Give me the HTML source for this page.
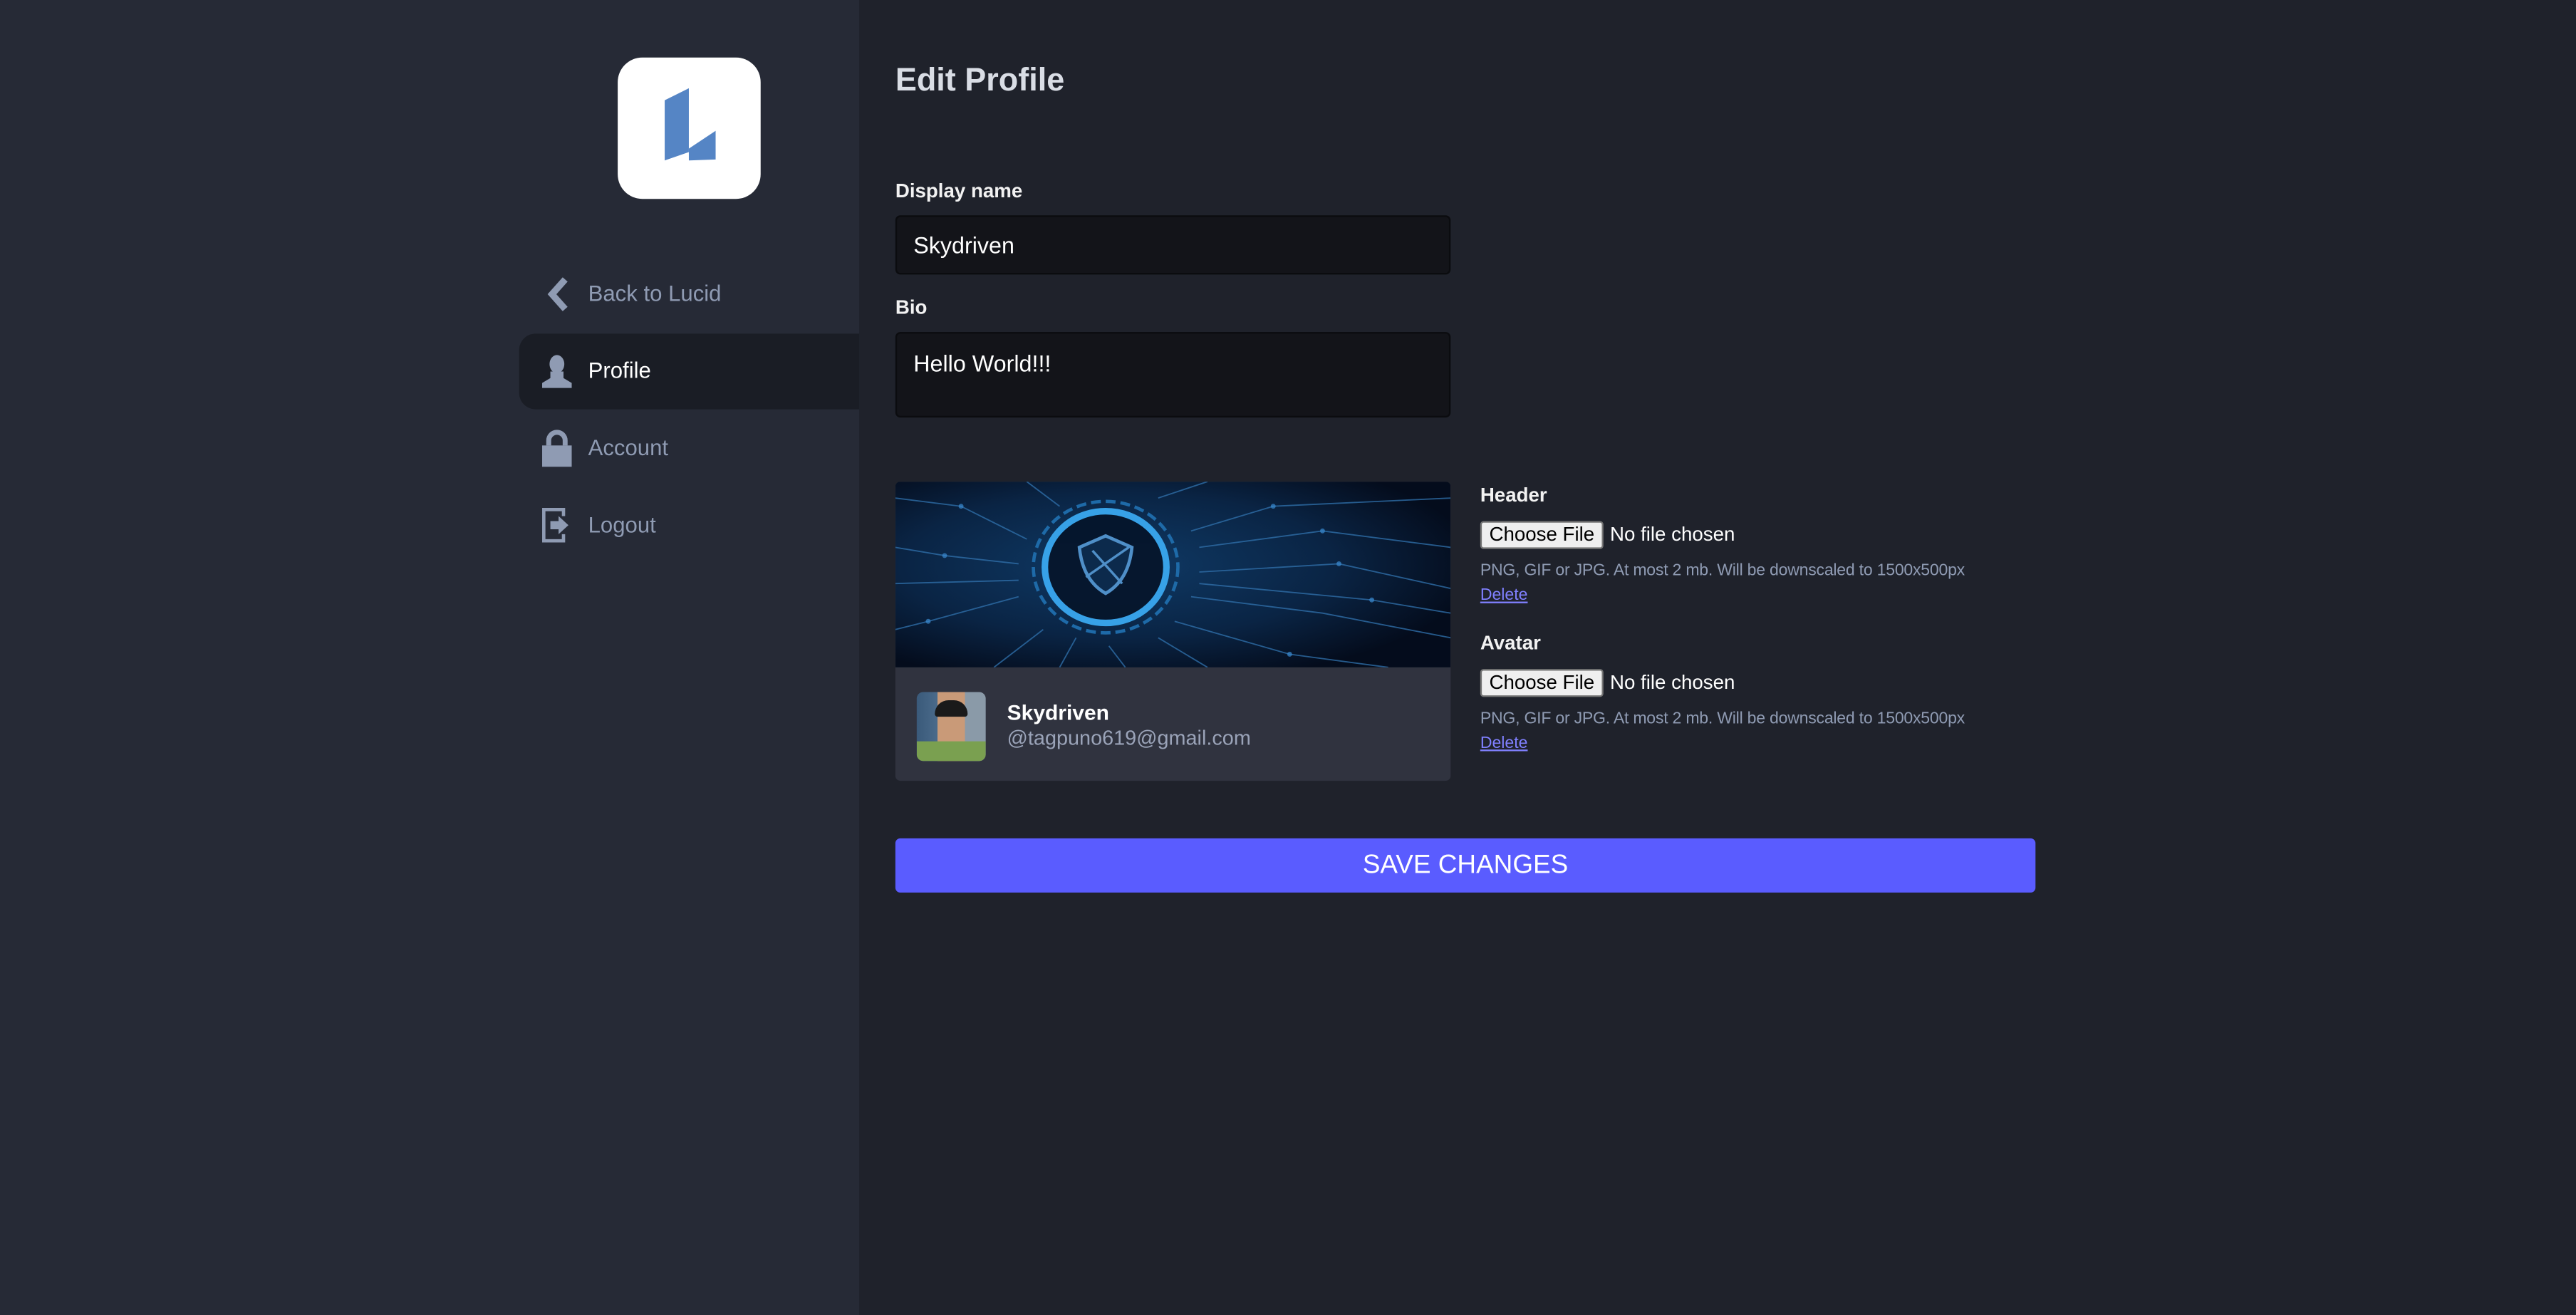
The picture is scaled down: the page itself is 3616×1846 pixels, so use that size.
<!DOCTYPE html>
<html><head><meta charset="utf-8"><style>
html,body{margin:0;padding:0;width:3616px;height:1846px;overflow:hidden;background:#1f222b;font-family:"Liberation Sans",sans-serif}
#w{position:absolute;left:0;top:0;width:1568px;height:800px;transform:scale(2.30612,2.3075);transform-origin:0 0;background:#1f222b}
.a{position:absolute}
.side{left:0;top:0;width:523px;height:800px;background:#262a36}
.logo{left:376px;top:35px;width:87px;height:86px;background:#fff;border-radius:15px}
.nav{left:358px;font-size:13.5px;color:#8f9bb3}
.act{left:316px;top:203px;width:207px;height:46px;background:#1a1d25;border-radius:10px 0 0 10px}
.lbl{font-size:12px;font-weight:bold;color:#f2f2f2}
.inp{left:545px;width:338px;background:#131419;border:1px solid #0b0c0f;border-radius:3px;color:#fff;font-size:14px;box-sizing:border-box;padding-left:10px}
.btn{left:901px;width:75px;height:17px;background:#efefef;border:1px solid #767676;border-radius:2px;font-size:12px;color:#000;text-align:center;line-height:15px;box-sizing:border-box}
.nf{left:980px;font-size:12px;color:#fff}
.hint{left:901px;font-size:10px;color:#8f9bb3;letter-spacing:-0.1px}
.del{left:901px;font-size:10px;color:#8080ff;text-decoration:underline}
</style></head><body><div id="w">
<div class="a side"></div>
<div class="a logo"><svg width="87" height="86" viewBox="0 0 87 86"><polygon points="28.6,26 43.3,18.7 43.3,57.5 28.6,62.6" fill="#5585c5"/><polygon points="43.3,55.4 59.6,44.6 59.6,62 43.3,62.6" fill="#5585c5"/></svg></div>
<svg class="a" style="left:330px;top:168px" width="18" height="22" viewBox="0 0 18 22"><path d="M14 2 L6 11 L14 20" stroke="#8f9bb3" stroke-width="4" fill="none"/></svg>
<div class="a nav" style="top:171px">Back to Lucid</div>
<div class="a act"></div>
<svg class="a" style="left:328px;top:215px" width="22" height="22" viewBox="0 0 22 22"><ellipse cx="11" cy="6.5" rx="4.5" ry="5.5" fill="#8f9bb3"/><path d="M7 11 L7 15 L2 18 L2 21 L20 21 L20 18 L15 15 L15 11Z" fill="#8f9bb3"/></svg>
<div class="a nav" style="top:218px;color:#fff">Profile</div>
<svg class="a" style="left:329px;top:261px" width="20" height="23" viewBox="0 0 20 23"><path d="M5 10 V7 a5 5 0 0 1 10 0 V10" stroke="#8f9bb3" stroke-width="3" fill="none"/><rect x="1" y="10" width="18" height="13" fill="#8f9bb3"/></svg>
<div class="a nav" style="top:312px" hidden></div>
<div class="a nav" style="top:265px">Account</div>
<svg class="a" style="left:329px;top:308px" width="20" height="23" viewBox="0 0 20 23"><path d="M14 6 V2 H2 V21 H14 V17" stroke="#8f9bb3" stroke-width="2" fill="none"/><path d="M6 9 H11 V6 L17 11.5 L11 17 V14 H6Z" fill="#8f9bb3"/></svg>
<div class="a nav" style="top:312px">Logout</div>

<div class="a" style="left:545px;top:38px;font-size:19.5px;font-weight:bold;color:#d9dde5">Edit Profile</div>
<div class="a lbl" style="left:545px;top:109px">Display name</div>
<div class="a inp" style="top:131px;height:36px;line-height:34px">Skydriven</div>
<div class="a lbl" style="left:545px;top:180px">Bio</div>
<div class="a inp" style="top:202px;height:52px;padding-top:10px">Hello World!!!</div>

<div class="a" style="left:545px;top:293px;width:338px;height:182px;background:#30333f;border-radius:3px;overflow:hidden">
<svg width="338" height="113" viewBox="0 0 338 113"><defs><radialGradient id="g" cx="0.4" cy="0.45" r="0.65"><stop offset="0" stop-color="#0f3a66"/><stop offset="0.6" stop-color="#0a2444"/><stop offset="1" stop-color="#040c1c"/></radialGradient></defs>
<rect width="338" height="113" fill="url(#g)"/>
<g stroke="#2f6ea8" stroke-width="0.8" fill="none" opacity="0.8">
<path d="M180 30 L230 15 L338 10"/><path d="M185 40 L260 30 L338 40"/><path d="M185 55 L270 50 L338 65"/><path d="M180 70 L260 80 L338 95"/><path d="M170 85 L240 105 L300 113"/><path d="M80 35 L40 15 L0 10"/><path d="M75 50 L30 45 L0 40"/><path d="M75 70 L20 85 L0 90"/><path d="M90 90 L60 113"/><path d="M130 100 L140 113"/><path d="M100 15 L80 0"/><path d="M160 10 L190 0"/><path d="M185 62 L290 72 L338 80"/><path d="M75 60 L0 62"/><path d="M110 95 L100 113"/><path d="M160 95 L190 113"/></g>
<g fill="#3a8ad0" opacity="0.7"><circle cx="230" cy="15" r="1.5"/><circle cx="260" cy="30" r="1.5"/><circle cx="270" cy="50" r="1.5"/><circle cx="40" cy="15" r="1.5"/><circle cx="30" cy="45" r="1.5"/><circle cx="290" cy="72" r="1.5"/><circle cx="240" cy="105" r="1.5"/><circle cx="20" cy="85" r="1.5"/></g>
<ellipse cx="128" cy="52" rx="37" ry="34" stroke="#3aa8f0" stroke-width="4" fill="#06162c" opacity="0.95"/>
<ellipse cx="128" cy="52" rx="44" ry="40" stroke="#1e6aa8" stroke-width="2" fill="none" stroke-dasharray="6 3"/>
<path d="M112 40 L128 33 L144 40 Q142 60 128 68 Q114 60 112 40Z" stroke="#4f8fc8" stroke-width="2" fill="#0c2a4c"/>
<path d="M116 58 L142 40 M120 42 L138 62" stroke="#4f8fc8" stroke-width="1.5"/></svg>
<div class="a" style="left:13px;top:128px;width:42px;height:42px;border-radius:4px;background:linear-gradient(90deg,#3a5a7a 0%,#4a6a8a 30%,#c99a78 30%,#c99a78 70%,#8a9aa8 70%);overflow:hidden"><div class="a" style="left:0;top:30px;width:42px;height:12px;background:#7aa050"></div><div class="a" style="left:11px;top:5px;width:20px;height:10px;background:#1a1a1a;border-radius:10px 10px 2px 2px"></div></div>
<div class="a" style="left:68px;top:133px;font-size:13px;font-weight:bold;color:#fff">Skydriven</div>
<div class="a" style="left:68px;top:149px;font-size:12.5px;color:#9aa3b8">@tagpuno619@gmail.com</div>
</div>

<div class="a lbl" style="left:901px;top:294px">Header</div>
<div class="a btn" style="top:317px">Choose File</div><div class="a nf" style="top:318px">No file chosen</div>
<div class="a hint" style="top:342px">PNG, GIF or JPG. At most 2 mb. Will be downscaled to 1500x500px</div>
<div class="a del" style="top:357px">Delete</div>
<div class="a lbl" style="left:901px;top:384px">Avatar</div>
<div class="a btn" style="top:407px">Choose File</div><div class="a nf" style="top:408px">No file chosen</div>
<div class="a hint" style="top:432px">PNG, GIF or JPG. At most 2 mb. Will be downscaled to 1500x500px</div>
<div class="a del" style="top:447px">Delete</div>

<div class="a" style="left:545px;top:510px;width:694px;height:33px;background:#5a5cff;border-radius:3px;color:#fff;font-size:16px;text-align:center;line-height:33px">SAVE CHANGES</div>
</div></body></html>
